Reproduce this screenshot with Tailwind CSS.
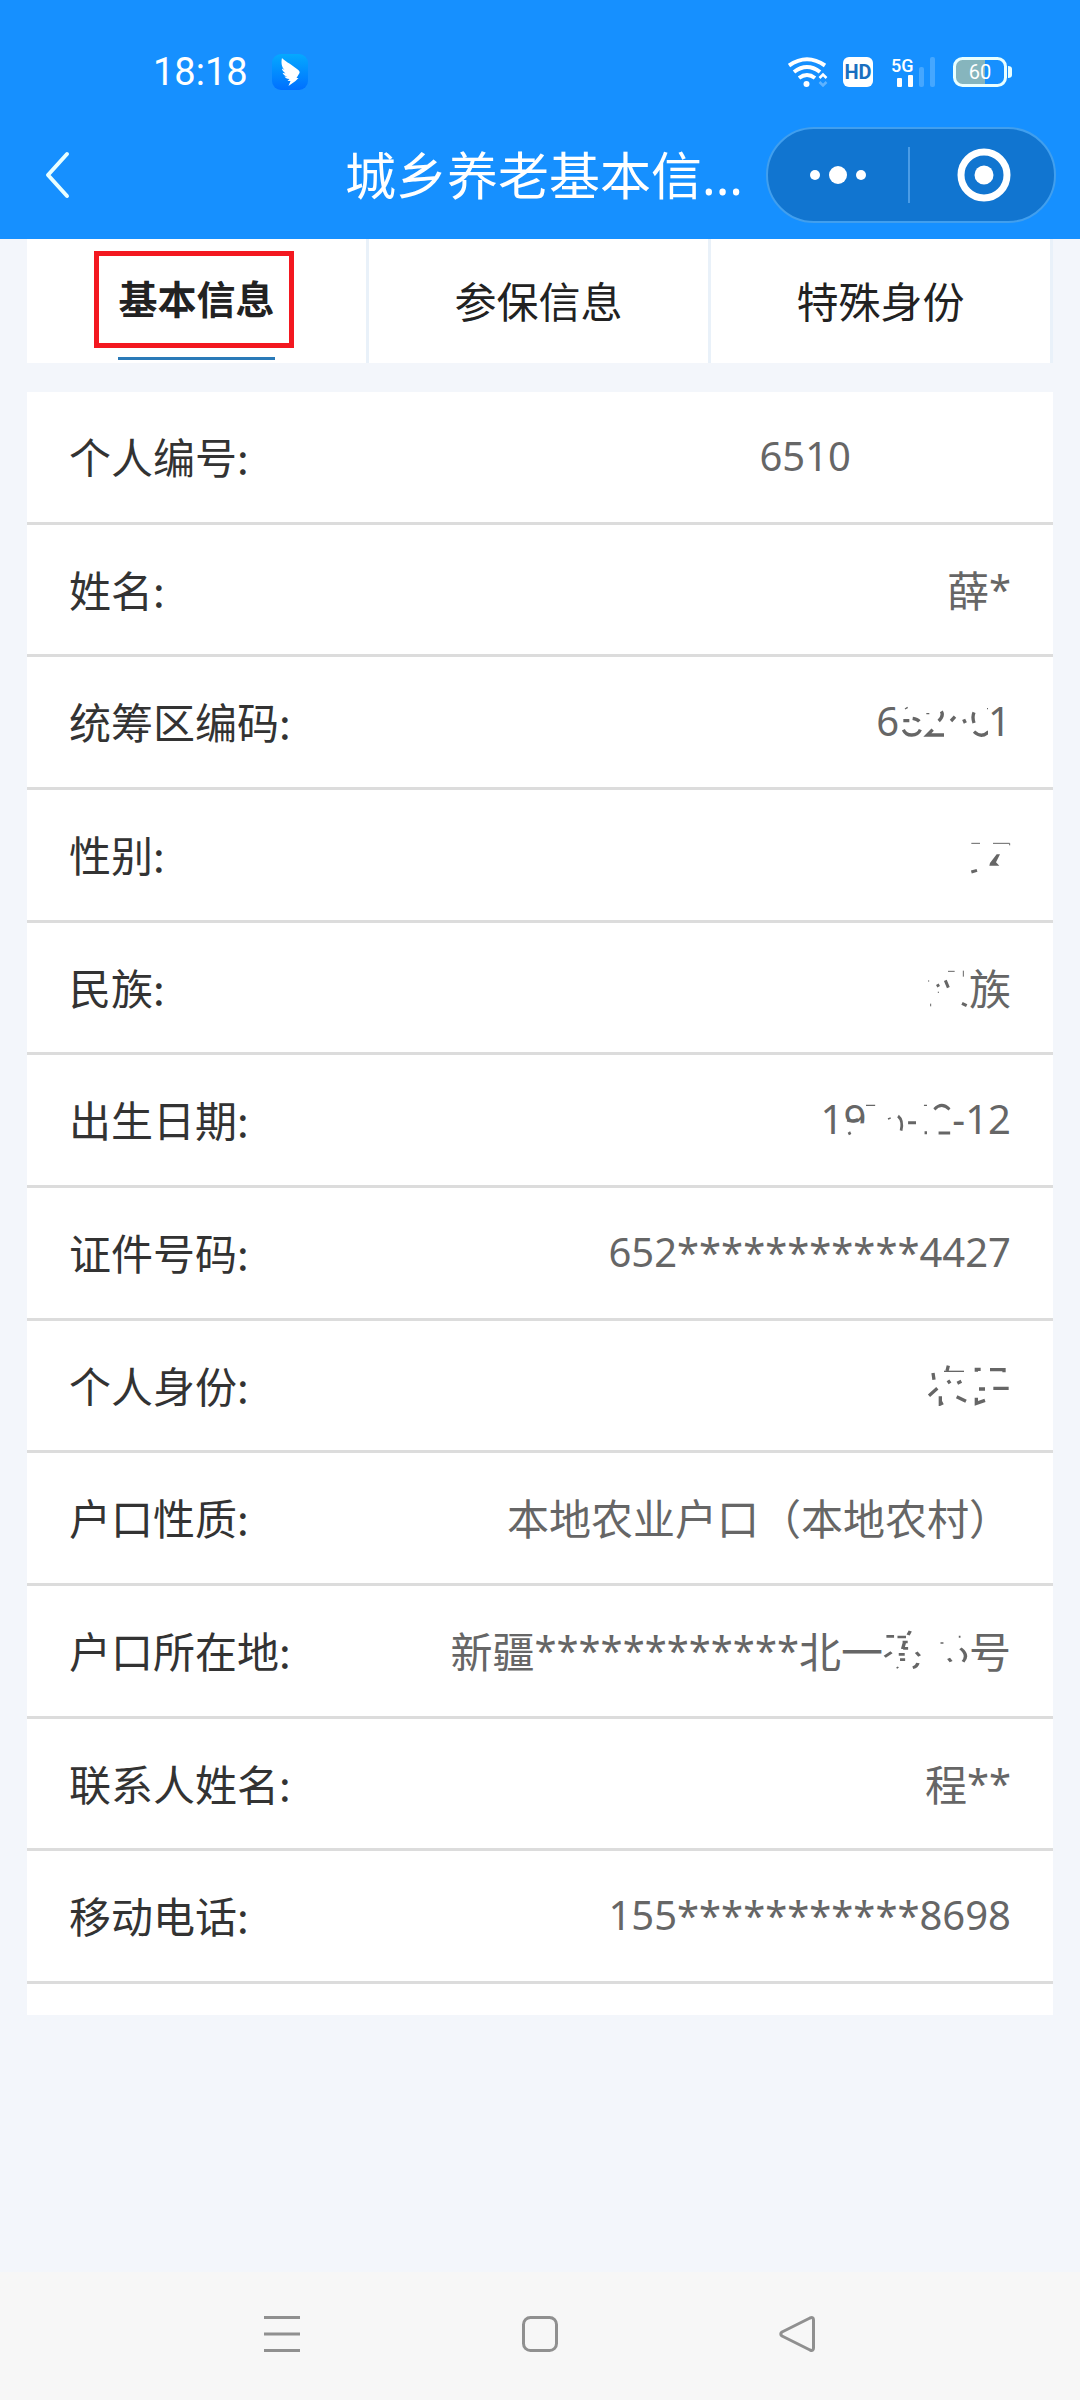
<!DOCTYPE html>
<html lang="zh-CN">

<head>
  <meta charset="UTF-8" />
  <meta name="viewport" content="width=device-width, initial-scale=1.0">
  <title>城乡养老基本信息</title>
  <script src="https://cdn.jsdelivr.net/npm/@tailwindcss/browser@4"></script>
</head>

<body class="bg-[#f3f6fb] text-[#333] font-['Noto_Sans_CJK_SC',sans-serif]">
  <div class="min-h-screen flex flex-col">

    <!-- Header -->
    <header class="bg-[#1690ff] text-white pt-[50px] pb-4">
      <!-- Status bar -->
      <div class="flex items-center justify-between h-11 pl-[153px] pr-[68px]">
        <div class="flex items-center gap-6">
          <span class="font-[Roboto,sans-serif] text-[38px] leading-none">18:18</span>
          <svg class="w-9 h-9" viewBox="0 0 36 36">
            <defs>
              <linearGradient id="wing-bg" x1="0" y1="0" x2="0" y2="1">
                <stop offset="0" stop-color="#05a9ff" />
                <stop offset="1" stop-color="#0070ff" />
              </linearGradient>
            </defs>
            <rect width="36" height="36" rx="9" fill="url(#wing-bg)" />
            <path fill="#fff" d="M10 4c1 2 9 6 15 11 2 1.500 3 2.500 2.500 4l-3 5h2l-3 3-7 5 2-5h-3l2-2c-3 0-4-1-5-2.500l3 .2c-3-1-4.500-2.500-5-4l3 .8c-2.500-2-3.500-3.500-3.500-5l2.500 1.500C9.500 13 9 8 10 4z" />
          </svg>
        </div>
        <div class="flex items-center">
          <!-- Wifi -->
          <svg class="w-10 h-[30px]" viewBox="0 0 40 30" fill="none" stroke="#fff" stroke-width="4">
            <path d="M1 8.500Q19 -4 37 8.500M6 15Q19 5 32 15M11 21Q19 15 27 21" />
            <circle cx="18.500" cy="27" r="3" fill="#fff" stroke="none" />
            <path stroke-width="2.500" d="M31.500 21l3.500-3.500 3.500 3.500" />
            <path stroke-width="2.500" stroke="#5fb3ff" d="M31.500 25l3.500 3.500 3.500-3.500" />
          </svg>
          <span class="ml-[15px] w-[30px] h-[30px] rounded-md bg-white text-[#1a6fc0] font-[Roboto,sans-serif] font-bold text-[20px] leading-[30px] text-center">HD</span>
          <!-- Mobile signal -->
          <svg class="ml-[18px] w-11 h-[30px] overflow-visible" viewBox="0 0 44 30" fill="#fff">
            <text x="0" y="15" font-family="Roboto, sans-serif" font-size="18" font-weight="500">5G</text>
            <rect x="6" y="21" width="5" height="9" rx="1" />
            <rect x="17" y="18" width="5" height="12" rx="1" />
            <rect x="28" y="10" width="5" height="20" rx="2" fill="#45a7ff" />
            <rect x="39" y="0" width="5" height="30" rx="2" fill="#45a7ff" />
          </svg>
          <!-- Battery -->
          <svg class="ml-[18px] w-[59px] h-[30px]" viewBox="0 0 59 30">
            <path fill="#86b5bd" d="M10 2H32V28H10Q2 28 2 20V10Q2 2 10 2z" />
            <rect x="1.500" y="1.500" width="51" height="27" rx="8" fill="none" stroke="#e9ffff" stroke-width="3" />
            <path fill="#e9ffff" d="M55 9q4 0 4 3v6q0 3-4 3z" />
            <text x="27" y="22" text-anchor="middle" font-family="Roboto, sans-serif" font-size="20" fill="#fff">60</text>
          </svg>
        </div>
      </div>

      <!-- Title bar -->
      <div class="flex items-center mt-8 h-[97px] pl-11 pr-6">
        <button class="flex-none" aria-label="返回">
          <svg class="w-7 h-12" viewBox="0 0 28 48" fill="none" stroke="#e9ffff" stroke-width="4" stroke-linecap="round" stroke-linejoin="round">
            <path d="M23 3L4 24l19 21" />
          </svg>
        </button>
        <h1 class="flex-1 pl-[273px] pb-px text-[51px] leading-none whitespace-nowrap">城乡养老基本信<span class="font-['Noto_Sans',sans-serif]">...</span></h1>
        <div class="flex-none flex items-center w-[290px] h-24 rounded-full bg-[#1175d0] border-2 border-[#419fee]">
          <button class="flex-1 flex justify-center" aria-label="更多">
            <svg class="w-14 h-5" viewBox="0 0 56 20" fill="#fff">
              <circle cx="5" cy="10" r="5" />
              <circle cx="28" cy="10" r="9" />
              <circle cx="51" cy="10" r="5" />
            </svg>
          </button>
          <span class="w-[2px] h-14 bg-[#4a9ce6]"></span>
          <button class="flex-1 flex justify-center pl-1" aria-label="关闭">
            <svg class="w-[54px] h-[54px]" viewBox="0 0 54 54">
              <circle cx="27" cy="27" r="23" fill="none" stroke="#fff" stroke-width="7" />
              <circle cx="27" cy="27" r="9.500" fill="#fff" />
            </svg>
          </button>
        </div>
      </div>
    </header>

    <main class="flex-1 px-[27px]">
      <!-- Tabs -->
      <nav class="grid grid-cols-3 h-[124px] bg-white text-[42px] text-[#222]">
        <button class="relative pb-2 border-r-3 border-[#e9f1f9] text-[39px] font-bold">
          基本信息
          <span class="absolute inset-x-[91px] bottom-[3px] h-[3px] bg-[#2a7ab8]"></span>
          <span class="absolute left-[67px] right-[72px] top-3 bottom-[15px] border-5 border-[#f31820]"></span>
        </button>
        <button class="pb-1 border-r-3 border-[#e9f1f9]">参保信息</button>
        <button class="pb-1 border-r-3 border-[#e9f1f9]">特殊身份</button>
      </nav>

      <!-- Details -->
      <div class="mt-[29px] pb-[31px] bg-white">
        <dl class="flex flex-col min-h-[1592px] text-[42px] leading-none *:flex-1 *:flex *:items-center *:justify-between *:px-[42px] *:pb-[2px] *:border-b-3 *:border-[#dcdcdc]">
          <div>
            <dt>个人编号:</dt>
            <dd class="mr-40 text-[#666] font-['Noto_Sans',sans-serif] text-[40px]">6510</dd>
          </div>
          <div>
            <dt>姓名:</dt>
            <dd class="flex items-center text-[#666]">薛<span class="font-['Noto_Sans',sans-serif] text-[40px]">*</span></dd>
          </div>
          <div>
            <dt>统筹区编码:</dt>
            <dd class="flex items-center text-[#666] font-['Noto_Sans',sans-serif] text-[40px]">
              <span>6</span>
              <svg class="w-[89px] h-[42px]" viewBox="597 485 267 126" fill="none" stroke="#666" stroke-width="10">
                <path d="M610 547h18M638 540q14 2 20 9M610 574q8 17 26 16 18 0 25-16M724 519q8 14-8 29M698 574l-16 16h50M753 548l12-13M791 543l5 11M822 522q-6 14 0 32M822 580q22 21 44 0" />
                <path stroke-width="4" d="M615 512l8-5M679 526h9M861 511h3" />
              </svg>
              <span>1</span>
            </dd>
          </div>
          <div>
            <dt>性别:</dt>
            <dd>
              <svg class="w-[41px] h-[42px]" viewBox="810 882 123 126" fill="none" stroke="#666">
                <path stroke-width="3" d="M814 913h26M879 913h50v6" />
                <path stroke-width="9" d="M814 999l17-5" />
                <path fill="#666" stroke="none" d="M890 946l10 0-12 24 10 10h-30l2-8z" />
              </svg>
            </dd>
          </div>
          <div>
            <dt>民族:</dt>
            <dd class="flex items-center text-[#666]">
              <svg class="w-[42px] h-[42px]" viewBox="681 201 126 126" fill="none" stroke="#666">
                <path stroke-width="3" d="M744 217h20M790 215v18M686 244v4M692 314v8M715 278v4" />
                <path stroke-width="9" d="M736 244l9 22M712 256l4 7M786 313l14 7" />
              </svg>
              <span>族</span>
            </dd>
          </div>
          <div>
            <dt>出生日期:</dt>
            <dd class="flex items-center text-[#666] font-['Noto_Sans',sans-serif] text-[40px]">
              <span>19</span>
              <svg class="w-[86px] h-[42px] overflow-visible" viewBox="498 598 282 126" preserveAspectRatio="none" fill="none" stroke="#666">
                <path fill="#fff" stroke="none" d="M415 674h81v50h-81z" />
                <path stroke-width="9" d="M436 664q20 6 36-2M440 706l8-4M603 652q18 14 10 44M636 672h26M690 702h8M722 632q24-24 50 0M736 703h38" />
                <path stroke-width="4" d="M498 620h30M570 661l9-3M688 620h10" />
              </svg>
              <span>-12</span>
            </dd>
          </div>
          <div>
            <dt>证件号码:</dt>
            <dd class="text-[#666] font-['Noto_Sans',sans-serif] text-[40px]">652***********4427</dd>
          </div>
          <div>
            <dt>个人身份:</dt>
            <dd>
              <svg class="w-[84px] h-[42px]" viewBox="1101 555 252 126" fill="none" stroke="#666">
                <path stroke-width="10" d="M1119 582l3 20M1165 560l-4 16M1107 650l25-22M1141 652v23l8-4M1164 604l6 9M1192 613l12-6M1190 653l28 14M1249 578v-7h13M1290 572h42v8M1257 630h18M1300 628h46M1249 656v17l26-9" />
                <path stroke-width="4" d="M1152 577h60" />
              </svg>
            </dd>
          </div>
          <div>
            <dt>户口性质:</dt>
            <dd class="text-[#666]">本地农业户口（本地农村）</dd>
          </div>
          <div>
            <dt>户口所在地:</dt>
            <dd class="flex items-center text-[#666]">
              <span>新疆</span>
              <span class="font-['Noto_Sans',sans-serif] text-[40px]">************</span>
              <span>北一</span>
              <svg class="w-[86px] h-[42px]" viewBox="1110 570 202 126" preserveAspectRatio="none" fill="none" stroke="#666">
                <path stroke-width="8" d="M1118 592h18M1114 653l16-13M1144 594h20M1174 576l-5 12M1156 609h12M1157 628h12M1147 646h14M1150 662h12M1180 686q10-3 12-14M1188 640l8 11M1264 658l6 10M1292 628q20 20 6 40M1160 612l-4 18" />
                <path stroke-width="4" d="M1142 688l4-4M1245 612h7M1290 590v6" />
              </svg>
              <span>号</span>
            </dd>
          </div>
          <div>
            <dt>联系人姓名:</dt>
            <dd class="flex items-center text-[#666]">程<span class="font-['Noto_Sans',sans-serif] text-[40px]">**</span></dd>
          </div>
          <div>
            <dt>移动电话:</dt>
            <dd class="text-[#666] font-['Noto_Sans',sans-serif] text-[40px]">155***********8698</dd>
          </div>
        </dl>
      </div>
    </main>

    <!-- System navigation -->
    <footer class="flex justify-center items-center gap-[218px] h-32 pb-1 bg-[#f7f7f7]">
      <button aria-label="最近任务">
        <svg class="w-10 h-10" viewBox="0 0 40 40" fill="none" stroke="#909090" stroke-width="3">
          <path d="M2 3.500h36M2 20h36M2 36.500h36" />
        </svg>
      </button>
      <button aria-label="主屏幕">
        <svg class="w-10 h-10" viewBox="0 0 40 40" fill="none" stroke="#909090" stroke-width="3">
          <rect x="3.500" y="3.500" width="33" height="33" rx="7" />
        </svg>
      </button>
      <button aria-label="后退">
        <svg class="w-10 h-10" viewBox="0 0 40 40" fill="none" stroke="#909090" stroke-width="3" stroke-linejoin="round">
          <path d="M4 18L32 4Q35.500 2.500 35.500 6V34Q35.500 37.500 32 36L4 22Q1.500 20 4 18z" />
        </svg>
      </button>
    </footer>
  </div>
</body>

</html>
